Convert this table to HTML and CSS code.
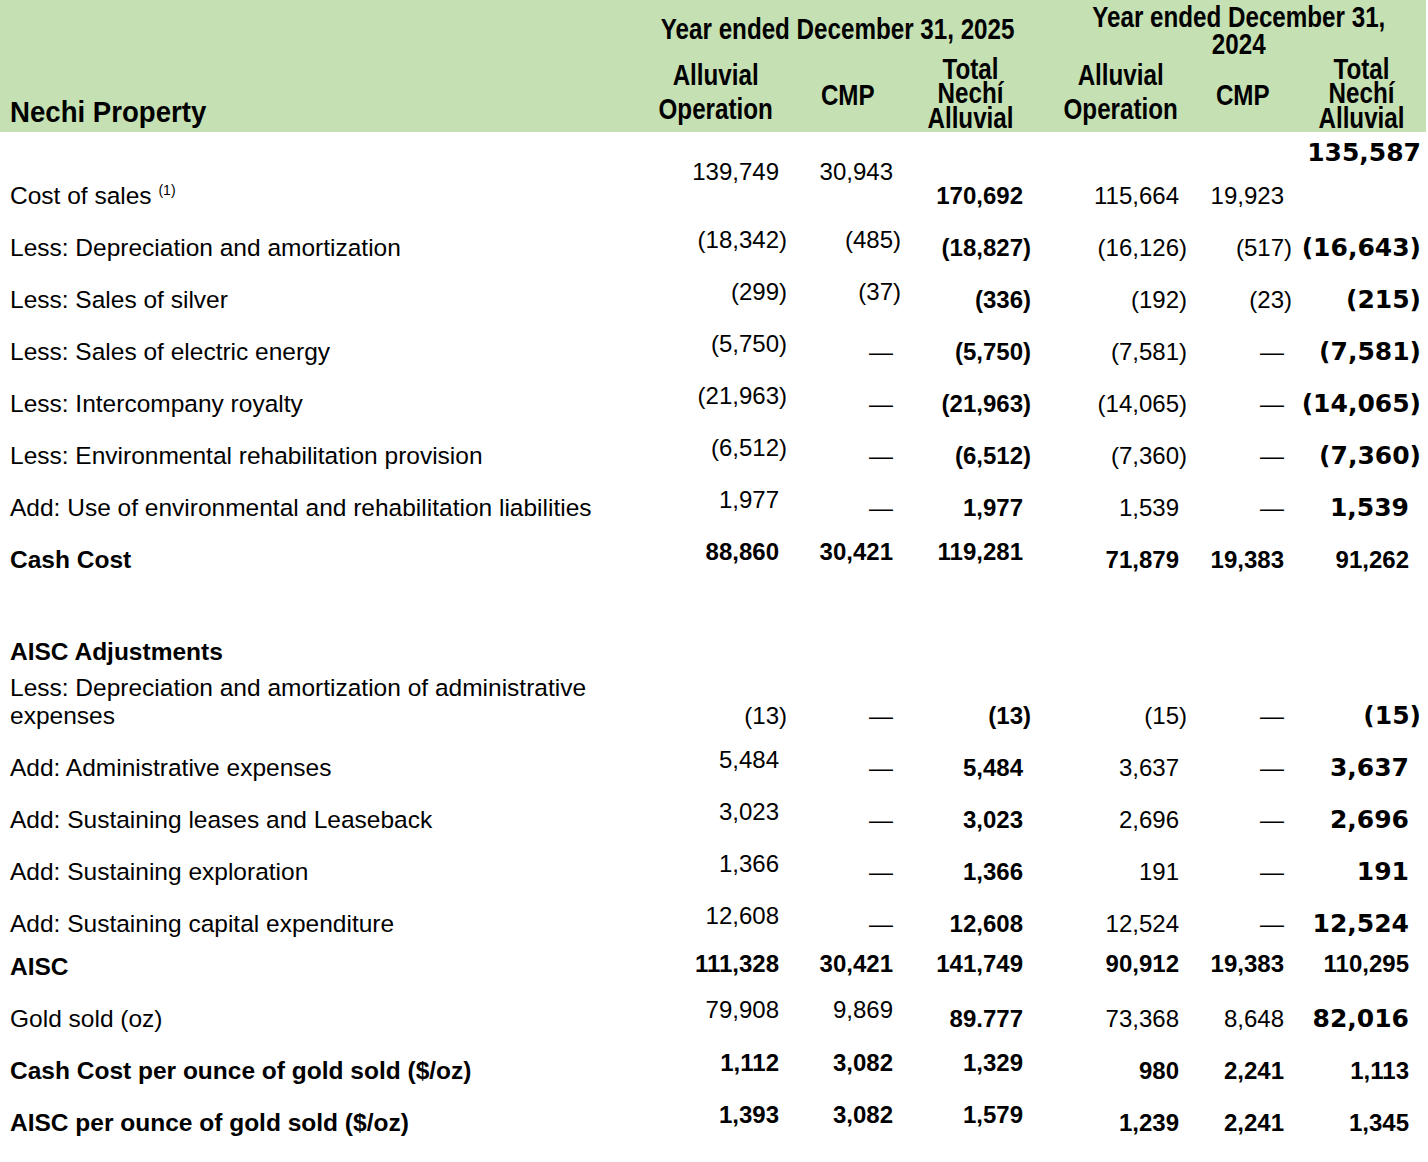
FILE: index.html
```html
<!DOCTYPE html>
<html lang="en">
<head>
<meta charset="utf-8">
<title>Nechi Property</title>
<link rel="stylesheet" href="styles.css">
</head>
<body>
<div class="sheet">
  <div class="head">
    <div class="h-title"><span class="cond-title">Nechi Property</span></div>
    <div class="h-year h-year-a"><span class="cond">Year ended December 31, 2025</span></div>
    <div class="h-year h-year-b"><span class="cond">Year ended December 31,<br>2024</span></div>
    <div class="h-sub h-op"><span class="cond">Alluvial<br>Operation</span></div>
    <div class="h-sub h-cmp"><span class="cond">CMP</span></div>
    <div class="h-sub h-tot h-tot-a"><span class="cond">Total<br>Nechí<br>Alluvial</span></div>
    <div class="h-sub h-op"><span class="cond">Alluvial<br>Operation</span></div>
    <div class="h-sub h-cmp"><span class="cond">CMP</span></div>
    <div class="h-sub h-tot"><span class="cond">Total<br>Nechí<br>Alluvial</span></div>
  </div>

  <div class="row row-first">
    <div class="cell label"><span>Cost of sales <sup class="fn">(1)</sup></span></div>
    <div class="cell up24">139,749</div>
    <div class="cell up24">30,943</div>
    <div class="cell b">170,692</div>
    <div class="cell">115,664</div>
    <div class="cell">19,923</div>
    <div class="cell dv up43"><span class="hang">135,587</span></div>
  </div>

  <div class="row">
    <div class="cell label">Less: Depreciation and amortization</div>
    <div class="cell up8"><span class="neg">(18,342)</span></div>
    <div class="cell up8"><span class="neg">(485)</span></div>
    <div class="cell b"><span class="neg">(18,827)</span></div>
    <div class="cell"><span class="neg">(16,126)</span></div>
    <div class="cell"><span class="neg">(517)</span></div>
    <div class="cell dv"><span class="neg">(16,643)</span></div>
  </div>

  <div class="row">
    <div class="cell label">Less: Sales of silver</div>
    <div class="cell up8"><span class="neg">(299)</span></div>
    <div class="cell up8"><span class="neg">(37)</span></div>
    <div class="cell b"><span class="neg">(336)</span></div>
    <div class="cell"><span class="neg">(192)</span></div>
    <div class="cell"><span class="neg">(23)</span></div>
    <div class="cell dv"><span class="neg">(215)</span></div>
  </div>

  <div class="row">
    <div class="cell label">Less: Sales of electric energy</div>
    <div class="cell up8"><span class="neg">(5,750)</span></div>
    <div class="cell">—</div>
    <div class="cell b"><span class="neg">(5,750)</span></div>
    <div class="cell"><span class="neg">(7,581)</span></div>
    <div class="cell">—</div>
    <div class="cell dv"><span class="neg">(7,581)</span></div>
  </div>

  <div class="row">
    <div class="cell label">Less: Intercompany royalty</div>
    <div class="cell up8"><span class="neg">(21,963)</span></div>
    <div class="cell">—</div>
    <div class="cell b"><span class="neg">(21,963)</span></div>
    <div class="cell"><span class="neg">(14,065)</span></div>
    <div class="cell">—</div>
    <div class="cell dv"><span class="neg">(14,065)</span></div>
  </div>

  <div class="row">
    <div class="cell label">Less: Environmental rehabilitation provision</div>
    <div class="cell up8"><span class="neg">(6,512)</span></div>
    <div class="cell">—</div>
    <div class="cell b"><span class="neg">(6,512)</span></div>
    <div class="cell"><span class="neg">(7,360)</span></div>
    <div class="cell">—</div>
    <div class="cell dv"><span class="neg">(7,360)</span></div>
  </div>

  <div class="row">
    <div class="cell label">Add: Use of environmental and rehabilitation liabilities</div>
    <div class="cell up8">1,977</div>
    <div class="cell">—</div>
    <div class="cell b">1,977</div>
    <div class="cell">1,539</div>
    <div class="cell">—</div>
    <div class="cell dv">1,539</div>
  </div>

  <div class="row">
    <div class="cell label b">Cash Cost</div>
    <div class="cell b up8">88,860</div>
    <div class="cell b up8">30,421</div>
    <div class="cell b up8">119,281</div>
    <div class="cell b">71,879</div>
    <div class="cell b">19,383</div>
    <div class="cell b">91,262</div>
  </div>

  <div class="row row-spacer"></div>

  <div class="row row-sub">
    <div class="cell label b">AISC Adjustments</div>
  </div>

  <div class="row row-two">
    <div class="cell label">Less: Depreciation and amortization of administrative expenses</div>
    <div class="cell"><span class="neg">(13)</span></div>
    <div class="cell">—</div>
    <div class="cell b"><span class="neg">(13)</span></div>
    <div class="cell"><span class="neg">(15)</span></div>
    <div class="cell">—</div>
    <div class="cell dv"><span class="neg">(15)</span></div>
  </div>

  <div class="row">
    <div class="cell label">Add: Administrative expenses</div>
    <div class="cell up8">5,484</div>
    <div class="cell">—</div>
    <div class="cell b">5,484</div>
    <div class="cell">3,637</div>
    <div class="cell">—</div>
    <div class="cell dv">3,637</div>
  </div>

  <div class="row">
    <div class="cell label">Add: Sustaining leases and Leaseback</div>
    <div class="cell up8">3,023</div>
    <div class="cell">—</div>
    <div class="cell b">3,023</div>
    <div class="cell">2,696</div>
    <div class="cell">—</div>
    <div class="cell dv">2,696</div>
  </div>

  <div class="row">
    <div class="cell label">Add: Sustaining exploration</div>
    <div class="cell up8">1,366</div>
    <div class="cell">—</div>
    <div class="cell b">1,366</div>
    <div class="cell">191</div>
    <div class="cell">—</div>
    <div class="cell dv">191</div>
  </div>

  <div class="row">
    <div class="cell label">Add: Sustaining capital expenditure</div>
    <div class="cell up8">12,608</div>
    <div class="cell">—</div>
    <div class="cell b">12,608</div>
    <div class="cell">12,524</div>
    <div class="cell">—</div>
    <div class="cell dv">12,524</div>
  </div>

  <div class="row row-aisc">
    <div class="cell label b">AISC</div>
    <div class="cell b up3">111,328</div>
    <div class="cell b up3">30,421</div>
    <div class="cell b up3">141,749</div>
    <div class="cell b up3">90,912</div>
    <div class="cell b up3">19,383</div>
    <div class="cell b up3">110,295</div>
  </div>

  <div class="row row-gold">
    <div class="cell label">Gold sold (oz)</div>
    <div class="cell up9">79,908</div>
    <div class="cell up9">9,869</div>
    <div class="cell b">89.777</div>
    <div class="cell">73,368</div>
    <div class="cell">8,648</div>
    <div class="cell dv">82,016</div>
  </div>

  <div class="row">
    <div class="cell label b">Cash Cost per ounce of gold sold ($/oz)</div>
    <div class="cell b up8">1,112</div>
    <div class="cell b up8">3,082</div>
    <div class="cell b up8">1,329</div>
    <div class="cell b">980</div>
    <div class="cell b">2,241</div>
    <div class="cell b">1,113</div>
  </div>

  <div class="row">
    <div class="cell label b">AISC per ounce of gold sold ($/oz)</div>
    <div class="cell b up8">1,393</div>
    <div class="cell b up8">3,082</div>
    <div class="cell b up8">1,579</div>
    <div class="cell b">1,239</div>
    <div class="cell b">2,241</div>
    <div class="cell b">1,345</div>
  </div>
</div>
</body>
</html>
```
FILE: styles.css
```css
html, body {
  margin: 0;
  padding: 0;
  background: #ffffff;
}

body {
  font-family: "Liberation Sans", Arial, sans-serif;
  color: #000000;
  font-size: 24px;
}

.sheet {
  width: 1428px;
}

/* ---------- header band ---------- */
.head {
  display: grid;
  grid-template-columns: 650px 132px 132px 138px 138px 106px 130px;
  grid-template-rows: 57px 75px;
  width: 1426px;
  background: #c5e0b3;
  font-family: "Liberation Sans", Arial, sans-serif;
  font-weight: 700;
  font-size: 29.5px;
}

.cond {
  display: block;
  white-space: nowrap;
  text-align: center;
  transform: scaleX(0.82);
  transform-origin: center;
}

.cond-title {
  display: block;
  white-space: nowrap;
  transform: scaleX(0.92);
  transform-origin: left center;
}

.h-title {
  grid-column: 1;
  grid-row: 1 / 3;
  align-self: end;
  padding: 0 0 4px 10px;
  font-size: 30px;
  line-height: 32px;
}

.h-year {
  grid-row: 1;
  display: flex;
  justify-content: center;
  align-items: center;
}

.h-year-a {
  grid-column: 2 / 5;
  padding-right: 26px;
  line-height: 32px;
}

.h-year-b {
  grid-column: 5 / 8;
  line-height: 27px;
  padding-top: 2px;
}

.h-sub {
  grid-row: 2;
  display: flex;
  justify-content: center;
  align-items: flex-end;
}

.h-op {
  line-height: 34px;
  padding-bottom: 6px;
}

.h-cmp {
  line-height: 28px;
  padding-bottom: 23px;
}

.h-tot {
  line-height: 24.5px;
  padding-bottom: 2px;
}

.h-tot-a {
  padding-right: 26px;
}

/* ---------- body rows ---------- */
.row {
  display: grid;
  grid-template-columns: 640px 139px 114px 130px 156px 105px 125px;
  height: 52px;
}

.row-first { height: 90px; }
.row-sub { height: 36px; }
.row-two { height: 68px; }
.row-aisc { height: 42px; }
.row-gold { height: 53px; }

.cell {
  display: flex;
  align-items: flex-end;
  justify-content: flex-end;
  padding-bottom: 12px;
  line-height: 28px;
  white-space: nowrap;
}

.label {
  justify-content: flex-start;
  padding-left: 10px;
  padding-right: 30px;
  white-space: normal;
  font-size: 24.5px;
}

.row-sub .label { padding-bottom: 8px; }

.b { font-weight: 700; }

.dv {
  font-family: "DejaVu Sans", Verdana, sans-serif;
  font-weight: 700;
  font-size: 25px;
}

.neg { margin-right: -8px; }
.dv .neg, .hang { margin-right: -12px; }

.up3 { padding-bottom: 15px; }
.up8 { padding-bottom: 20px; }
.up9 { padding-bottom: 21px; }
.up24 { padding-bottom: 36px; }
.up43 { padding-bottom: 55px; }

.fn {
  font-size: 14px;
  line-height: 0;
  vertical-align: 9px;
}
```
